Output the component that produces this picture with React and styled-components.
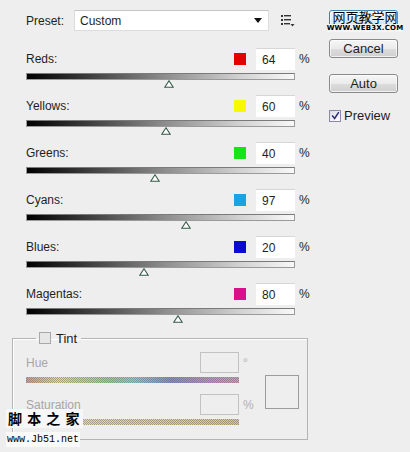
import React from 'react';
import styled, { createGlobalStyle } from 'styled-components';

const GlobalStyle = createGlobalStyle`
  html, body {
    margin: 0;
    padding: 0;
    background: #eeeeee;
  }
  body {
    font-family: "Liberation Sans", Arial, sans-serif;
    font-size: 12px;
    color: #1e1e1e;
  }
`;

const channels = [
  { name: 'Reds', color: '#e30000', value: 64, thumb: 143 },
  { name: 'Yellows', color: '#f8f800', value: 60, thumb: 140 },
  { name: 'Greens', color: '#14e614', value: 40, thumb: 129 },
  { name: 'Cyans', color: '#1aa3e3', value: 97, thumb: 160 },
  { name: 'Blues', color: '#0a0ad2', value: 20, thumb: 118 },
  { name: 'Magentas', color: '#d8108a', value: 80, thumb: 152 },
];

const BAR_WIDTH = 269;

const Thumb = () => (
  <svg width="10" height="8" viewBox="0 0 10 8">
    <path d="M5 0.8 L9.2 7.2 L0.8 7.2 Z" fill="#ffffff" stroke="#345a48" strokeWidth="1.1" />
  </svg>
);

const PresetIcon = () => (
  <svg width="14" height="14" viewBox="0 0 14 14">
    <rect x="0" y="1" width="2" height="2" fill="#333" />
    <rect x="0" y="5" width="2" height="2" fill="#333" />
    <rect x="0" y="9" width="2" height="2" fill="#333" />
    <rect x="3" y="1" width="7" height="1.4" fill="#333" />
    <rect x="3" y="5" width="7" height="1.4" fill="#333" />
    <rect x="3" y="9" width="6" height="1.4" fill="#333" />
    <path d="M9.5 10 L13.5 10 L11.5 12.5 Z" fill="#333" />
  </svg>
);

const SelectArrow = () => (
  <svg width="8" height="5" viewBox="0 0 8 5">
    <path d="M0 0 L8 0 L4 5 Z" fill="#111" />
  </svg>
);

const CheckMark = () => (
  <svg width="9" height="9" viewBox="0 0 9 9">
    <path d="M1.2 4.6 L3.6 7.4 L7.8 1.2" fill="none" stroke="#2a2a7a" strokeWidth="1.5" />
  </svg>
);

const App = () => {
  return (
    <>
      <GlobalStyle />
      <Window>
        <Main>
          <PresetRow>
            <PresetLabel>Preset:</PresetLabel>
            <Select>
              <span>Custom</span>
              <SelectArrow />
            </Select>
            <IconSlot>
              <PresetIcon />
            </IconSlot>
          </PresetRow>

          <Channels>
            {channels.map((c) => (
              <Channel key={c.name}>
                <ChannelHeader>
                  <ChannelLabel>{c.name}:</ChannelLabel>
                  <Swatch $color={c.color} />
                  <ValueField>{c.value}</ValueField>
                  <Unit>%</Unit>
                </ChannelHeader>
                <Bar />
                <ThumbTrack>
                  <ThumbMark style={{ left: `${(c.thumb / BAR_WIDTH) * 100}%` }}>
                    <Thumb />
                  </ThumbMark>
                </ThumbTrack>
              </Channel>
            ))}
          </Channels>

          <TintBox>
            <Legend>
              <CheckBox $disabled />
              <span>Tint</span>
            </Legend>
            <TintInner>
              <TintFields>
                <FieldRow>
                  <DimLabel>Hue</DimLabel>
                  <DimField />
                  <DimUnit>°</DimUnit>
                </FieldRow>
                <HueBar />
                <FieldRow $spaced>
                  <DimLabel>Saturation</DimLabel>
                  <DimField />
                  <DimUnit>%</DimUnit>
                </FieldRow>
                <SatBar />
              </TintFields>
              <TintSwatch />
            </TintInner>
          </TintBox>
        </Main>

        <Side>
          <Button $primary>OK</Button>
          <Button>Cancel</Button>
          <Button $gap={16}>Auto</Button>
          <PreviewRow>
            <CheckBox>
              <CheckMark />
            </CheckBox>
            <span>Preview</span>
          </PreviewRow>
        </Side>

        <StampTop>
          <StampCn>网页教学网</StampCn>
          <StampUrl>WWW.WEB3X.COM</StampUrl>
        </StampTop>

        <StampBottom>
          <StampBottomCn>脚 本 之 家</StampBottomCn>
          <StampBottomUrl>www.Jb51.net</StampBottomUrl>
        </StampBottom>
      </Window>
    </>
  );
};

const Window = styled.div`
  position: relative;
  display: flex;
  width: 410px;
  height: 452px;
  box-sizing: border-box;
  padding: 10px 0 0 12px;
  overflow: hidden;
`;

const Main = styled.div`
  display: flex;
  flex-direction: column;
  width: 296px;
`;

const PresetRow = styled.div`
  display: flex;
  align-items: center;
  height: 21px;
  padding-left: 14px;
`;

const PresetLabel = styled.div`
  width: 48px;
`;

const Select = styled.div`
  display: flex;
  align-items: center;
  justify-content: space-between;
  box-sizing: border-box;
  width: 195px;
  height: 21px;
  padding: 0 6px 0 5px;
  background: #ffffff;
  border: 1px solid #dcdcdc;
  border-top-color: #c4c4c4;
`;

const IconSlot = styled.div`
  display: flex;
  margin-left: 12px;
`;

const Channels = styled.div`
  display: flex;
  flex-direction: column;
  margin-top: 17px;
`;

const Channel = styled.div`
  display: flex;
  flex-direction: column;
  padding-left: 14px;
`;

const ChannelHeader = styled.div`
  display: flex;
  align-items: center;
  height: 22px;
`;

const ChannelLabel = styled.div`
  flex: 1;
`;

const Swatch = styled.div`
  width: 12px;
  height: 12px;
  margin-right: 10px;
  background: ${(p) => p.$color};
`;

const ValueField = styled.div`
  box-sizing: border-box;
  width: 39px;
  height: 22px;
  padding: 4px 0 0 6px;
  background: #ffffff;
  border-top: 1px solid #d6d6d6;
`;

const Unit = styled.div`
  width: 9px;
  margin-left: 4px;
`;

const Bar = styled.div`
  box-sizing: border-box;
  width: ${BAR_WIDTH}px;
  height: 7px;
  margin-top: 3px;
  border: 1px solid #9a9a9a;
  border-top-color: #7a7a7a;
  background: linear-gradient(to right, #000000 0%, #3a3a3a 22%, #8e8e8e 52%, #d2d2d2 80%, #f8f8f8 100%);
`;

const ThumbTrack = styled.div`
  position: relative;
  width: ${BAR_WIDTH}px;
  height: 15px;
`;

const ThumbMark = styled.div`
  position: absolute;
  top: 0;
  display: flex;
  transform: translateX(-5px);
`;

const TintBox = styled.fieldset`
  box-sizing: border-box;
  margin: 1px 0 0 0;
  padding: 7px 0 14px 13px;
  width: 296px;
  border: 1px solid #b4b4b4;
  box-shadow: inset 1px 1px 0 #ffffff;
`;

const Legend = styled.legend`
  display: flex;
  align-items: center;
  gap: 5px;
  margin-left: 10px;
  padding: 0 4px 0 3px;
  height: 14px;
  font-size: 13px;
`;

const CheckBox = styled.div`
  display: flex;
  align-items: center;
  justify-content: center;
  box-sizing: border-box;
  width: 12px;
  height: 12px;
  border: 1px solid ${(p) => (p.$disabled ? '#a8a8a8' : '#8a8aa8')};
  background: ${(p) => (p.$disabled ? '#e6e6e6' : 'linear-gradient(135deg, #dcdce8, #ffffff)')};
`;

const TintInner = styled.div`
  display: flex;
`;

const TintFields = styled.div`
  display: flex;
  flex-direction: column;
  width: 229px;
`;

const FieldRow = styled.div`
  display: flex;
  align-items: center;
  height: 21px;
  margin-top: ${(p) => (p.$spaced ? '11px' : '0')};
`;

const DimLabel = styled.div`
  flex: 1;
  color: #a6a6a6;
`;

const DimField = styled.div`
  box-sizing: border-box;
  width: 39px;
  height: 21px;
  border: 1px solid #c2c2c2;
`;

const DimUnit = styled.div`
  width: 12px;
  margin-left: 4px;
  color: #b0b0b0;
`;

const checker = `repeating-conic-gradient(rgba(110, 110, 110, 0.55) 0 25%, transparent 0 50%) 0 0 / 2px 2px`;

const HueBar = styled.div`
  width: 213px;
  height: 6px;
  margin-top: 4px;
  background: ${checker},
    linear-gradient(to right, #d89a88 0%, #e8e07a 15%, #b8e07a 27%, #8ad88a 40%, #7ad8d8 50%, #7a8ae0 68%, #c088e0 84%, #e890b8 100%);
`;

const SatBar = styled.div`
  width: 213px;
  height: 6px;
  margin-top: 4px;
  background: ${checker}, linear-gradient(to right, #e8e0b8, #d8c880);
`;

const TintSwatch = styled.div`
  box-sizing: border-box;
  width: 34px;
  height: 34px;
  margin: 23px 0 0 10px;
  border: 1px solid #9c9c9c;
`;

const Side = styled.div`
  display: flex;
  flex-direction: column;
  width: 69px;
  margin-left: 21px;
`;

const Button = styled.div`
  box-sizing: border-box;
  width: 69px;
  height: 19px;
  margin-top: ${(p) => (p.$primary ? 0 : p.$gap || 10)}px;
  border: 1px solid ${(p) => (p.$primary ? '#3c7fb1' : '#8a8a8a')};
  border-radius: 3px;
  background: ${(p) =>
    p.$primary
      ? 'linear-gradient(#eaf6fd, #bee6fd)'
      : 'linear-gradient(#f6f6f6 0%, #ebebeb 50%, #dddddd 51%, #cfcfcf 100%)'};
  box-shadow: inset 0 0 0 1px rgba(255, 255, 255, 0.7);
  font-size: 13px;
  line-height: 17px;
  text-align: center;
`;

const PreviewRow = styled.div`
  display: flex;
  align-items: center;
  gap: 3px;
  margin-top: 15px;
  font-size: 13px;
`;

const StampTop = styled.div`
  position: absolute;
  left: 330px;
  top: 9px;
  display: flex;
  flex-direction: column;
  align-items: center;
  width: 70px;
`;

const StampCn = styled.div`
  font-family: "Noto Sans CJK SC", sans-serif;
  font-size: 13px;
  line-height: 15px;
  color: #000;
  text-shadow: 0 0 2px #ffffff, 0 0 1px #ffffff;
`;

const StampUrl = styled.div`
  font-family: "DejaVu Sans", sans-serif;
  font-weight: bold;
  font-size: 7px;
  line-height: 8px;
  letter-spacing: 0.2px;
  color: #000;
  background: #f4f4f4;
`;

const StampBottom = styled.div`
  position: absolute;
  left: 6px;
  top: 409px;
  display: flex;
  flex-direction: column;
  align-items: flex-start;
`;

const StampBottomCn = styled.div`
  padding: 0 2px;
  font-family: "Noto Sans CJK SC", sans-serif;
  font-size: 14px;
  font-weight: bold;
  line-height: 19px;
  letter-spacing: 1px;
  color: #000;
  background: #f7f7f7;
`;

const StampBottomUrl = styled.div`
  margin-top: 4px;
  padding: 0 1px;
  font-family: "Liberation Mono", monospace;
  font-size: 10px;
  line-height: 15px;
  color: #000;
  background: #fafafa;
`;

export default App;
